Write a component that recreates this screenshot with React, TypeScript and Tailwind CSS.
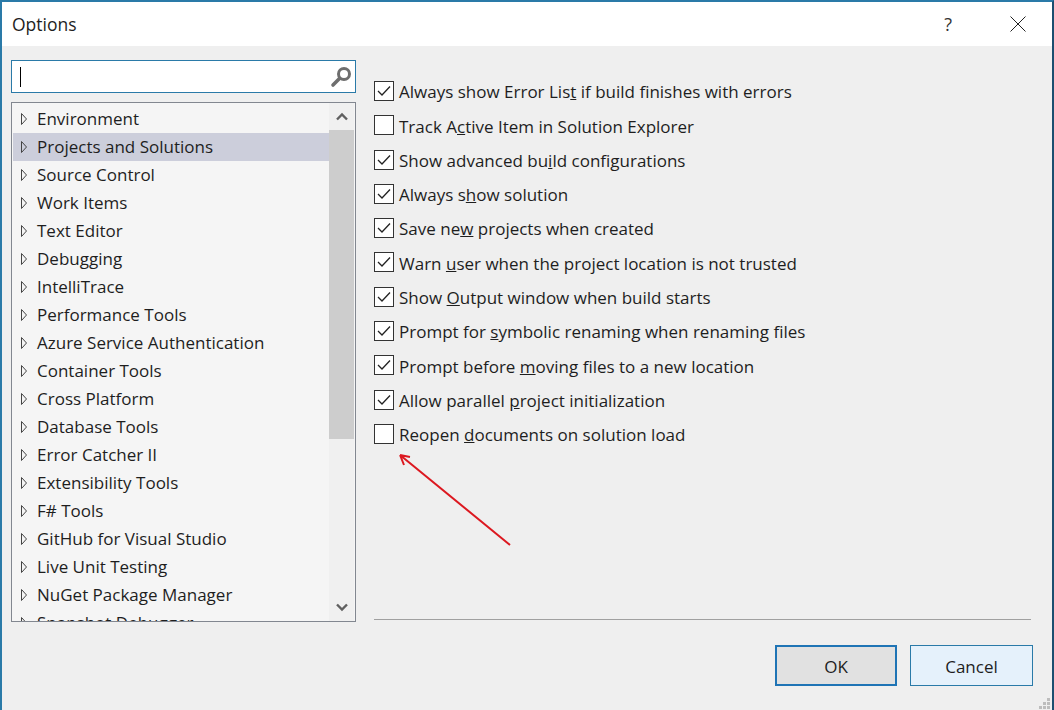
import { Fragment } from 'react'

const treeItems = [
  'Environment',
  'Projects and Solutions',
  'Source Control',
  'Work Items',
  'Text Editor',
  'Debugging',
  'IntelliTrace',
  'Performance Tools',
  'Azure Service Authentication',
  'Container Tools',
  'Cross Platform',
  'Database Tools',
  'Error Catcher II',
  'Extensibility Tools',
  'F# Tools',
  'GitHub for Visual Studio',
  'Live Unit Testing',
  'NuGet Package Manager',
  'Snapshot Debugger',
]

// [before, underlined letter, after, checked]
const options: [string, string, string, boolean][] = [
  ['Always show Error Lis', 't', ' if build finishes with errors', true],
  ['Track A', 'c', 'tive Item in Solution Explorer', false],
  ['Show advanced bu', 'i', 'ld configurations', true],
  ['Always s', 'h', 'ow solution', true],
  ['Save ne', 'w', ' projects when created', true],
  ['Warn ', 'u', 'ser when the project location is not trusted', true],
  ['Show ', 'O', 'utput window when build starts', true],
  ['Prompt for ', 's', 'ymbolic renaming when renaming files', true],
  ['Prompt before ', 'm', 'oving files to a new location', true],
  ['Allow parallel ', 'p', 'roject initialization', true],
  ['Reopen ', 'd', 'ocuments on solution load', false],
]

function Expander() {
  return (
    <svg width="8" height="14" viewBox="0 0 8 14" className="shrink-0">
      <path d="M1.5 1.5 L6.5 7 L1.5 12.5 Z" fill="none" stroke="#444" strokeWidth="1" />
    </svg>
  )
}

function Chevron({ up }: { up?: boolean }) {
  return (
    <svg width="12" height="9" viewBox="0 0 12 9">
      <path d={up ? 'M1 7.5 L6 2.5 L11 7.5' : 'M1 1.5 L6 6.5 L11 1.5'} fill="none" stroke="#606060" strokeWidth="2.4" />
    </svg>
  )
}

function Checkbox({ checked }: { checked: boolean }) {
  return (
    <div className="w-5 h-5 border border-[#333] bg-white shrink-0 flex items-center justify-center">
      {checked && (
        <svg width="14" height="12" viewBox="0 0 14 12">
          <path d="M1 6 L5 10 L13 1.5" fill="none" stroke="#222" strokeWidth="1.3" />
        </svg>
      )}
    </div>
  )
}

export default function App() {
  return (
    <div className="relative w-[1054px] h-[710px] flex flex-col bg-[#efefef] border-l-2 border-r-2 border-t-2 border-[#2a7aa8] border-r-[#1c4f70] text-[#1e1e1e] overflow-hidden font-['Open_Sans',sans-serif]">
      {/* Title bar */}
      <div className="h-[44px] bg-white flex items-center shrink-0 pl-[10px]">
        <span className="text-[17.5px]">Options</span>
        <span className="ml-auto text-[18px] text-[#333]">?</span>
        <svg width="16" height="16" viewBox="0 0 16 16" className="ml-[58px] mr-[26px]">
          <path d="M0.5 0.5 L15.5 15.5 M15.5 0.5 L0.5 15.5" stroke="#222" strokeWidth="1" />
        </svg>
      </div>

      <div className="flex flex-1 min-h-0">
        {/* Left column */}
        <div className="w-[345px] ml-[9px] mt-[14px] flex flex-col shrink-0">
          <div className="h-[33px] border border-[#2a7aa8] bg-white flex items-center pl-[8px] pr-[3px]">
            <div className="w-px h-5 bg-black" />
            <svg width="22" height="22" viewBox="0 0 22 22" className="ml-auto">
              <circle cx="14" cy="8" r="5.5" fill="none" stroke="#6e6e6e" strokeWidth="3" />
              <path d="M9.5 12.5 L3 19" stroke="#6e6e6e" strokeWidth="3.6" strokeLinecap="round" />
            </svg>
          </div>

          <div className="mt-[9px] h-[520px] border border-[#828790] bg-[#f5f5f5] flex overflow-hidden">
            <div className="flex-1 min-w-0 pt-[2px] pl-px overflow-hidden">
              {treeItems.map(item => (
                <div
                  key={item}
                  className={`h-[28px] flex items-center pl-[7px] gap-[9px] text-[17px] whitespace-nowrap ${item === 'Projects and Solutions' ? 'bg-[#cccedb]' : ''}`}
                >
                  <Expander />
                  <span>{item}</span>
                </div>
              ))}
            </div>
            <div className="w-[25px] mr-px bg-[#f0f0f0] flex flex-col items-center shrink-0">
              <div className="h-[27px] flex items-center justify-center shrink-0">
                <Chevron up />
              </div>
              <div className="w-full h-[309px] bg-[#cdcdcd] shrink-0" />
              <div className="mt-auto h-[27px] flex items-center justify-center shrink-0">
                <Chevron />
              </div>
            </div>
          </div>
        </div>

        {/* Right column */}
        <div className="flex-1 ml-[18px] mr-[21px] flex flex-col">
          <div className="mt-[35px] flex flex-col gap-[14.3px]">
            {options.map(([before, letter, after, checked]) => (
              <div key={before} className="h-5 flex items-center gap-[5px] text-[17px] whitespace-pre">
                <Checkbox checked={checked} />
                <span className="pt-[2px]">
                  <Fragment>{before}</Fragment>
                  <u>{letter}</u>
                  <Fragment>{after}</Fragment>
                </span>
              </div>
            ))}
          </div>

          <div className="mt-[175px] h-px bg-[#a0a0a0]" />

          <div className="mt-[25px] flex justify-end gap-[13px] -mr-[2px] text-[17px]">
            <button className="w-[122px] h-[41px] pt-[3px] border-2 border-[#1f74b5] bg-[#e1e1e1]">OK</button>
            <button className="w-[123px] h-[41px] pt-[3px] border border-[#2a7aa8] bg-[#e5f1fb]">Cancel</button>
          </div>
        </div>
      </div>

      {/* Annotation arrow */}
      <svg width="1054" height="710" className="absolute left-[-2px] top-[-2px] pointer-events-none">
        <path d="M510 545 L400 455 M400 455 L410 457 M400 455 L404 465" fill="none" stroke="#dc1820" strokeWidth="2" />
      </svg>

      {/* Resize grip */}
      <svg width="12" height="12" viewBox="0 0 12 12" className="absolute right-[1px] bottom-0">
        <g fill="#bdbdbd">
          <rect x="8" y="0" width="3" height="3" />
          <rect x="4" y="4" width="3" height="3" />
          <rect x="8" y="4" width="3" height="3" />
          <rect x="0" y="8" width="3" height="3" />
          <rect x="4" y="8" width="3" height="3" />
          <rect x="8" y="8" width="3" height="3" />
        </g>
      </svg>
    </div>
  )
}
